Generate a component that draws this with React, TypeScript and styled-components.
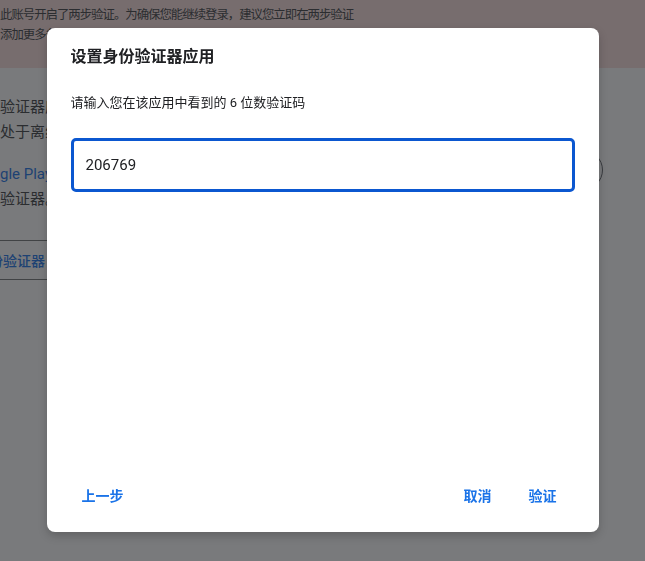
import React from 'react';
import styled, { createGlobalStyle } from 'styled-components';

const GlobalStyle = createGlobalStyle`
  html, body {
    margin: 0;
    padding: 0;
    width: 100%;
    height: 100%;
    overflow: hidden;
    background: #ffffff;
  }
  body {
    font-family: Roboto, "Noto Sans CJK SC", sans-serif;
  }
`;

const Page = styled.div`
  width: 645px;
  height: 561px;
  overflow: hidden;
  background: #ffffff;
`;

const Banner = styled.div`
  height: 68px;
  box-sizing: border-box;
  padding-top: 5px;
  background: #f9dedc;
  color: #3c4043;
  font-size: 12.4px;
  letter-spacing: -1px;
  line-height: 20px;
  white-space: nowrap;
`;

const Content = styled.div`
  display: flex;
  justify-content: space-between;
  padding: 27px 42px 0 0;
`;

const Column = styled.div`
  display: flex;
  flex-direction: column;
  width: 60px;
  overflow: hidden;
`;

const Paragraph = styled.p`
  margin: 0 0 17px;
  font-size: 15px;
  line-height: 25px;
  color: #3c4043;
  white-space: nowrap;
`;

const Link = styled.span`
  color: #1a73e8;
`;

const OutlineButton = styled.div`
  margin: 11px 0 0 -50px;
  width: 240px;
  height: 38px;
  padding: 0 24px;
  border: 1px solid #747775;
  border-radius: 4px;
  display: flex;
  align-items: center;
  font-size: 14px;
  font-weight: 500;
  color: #1a73e8;
`;

const Avatar = styled.div`
  flex: none;
  width: 40px;
  height: 40px;
  margin-top: 55px;
  border: 1px solid #5f6368;
  border-radius: 50%;
  box-sizing: border-box;
`;

const Overlay = styled.div`
  position: fixed;
  inset: 0;
  background: rgba(32, 33, 36, 0.6);
  display: flex;
  align-items: center;
  justify-content: center;
`;

const Dialog = styled.div`
  width: 552px;
  height: 504px;
  margin-top: -1px;
  box-sizing: border-box;
  background: #ffffff;
  border-radius: 8px;
  box-shadow: 0 4px 10px rgba(0, 0, 0, 0.2);
  display: flex;
  flex-direction: column;
`;

const Body = styled.div`
  flex: 1;
  padding: 17px 24px 0;
  display: flex;
  flex-direction: column;
`;

const Title = styled.h2`
  margin: 0;
  font-size: 16px;
  line-height: 24px;
  font-weight: 700;
  color: #202124;
`;

const Subtitle = styled.p`
  margin: 24px 0 0;
  font-size: 13px;
  line-height: 20px;
  color: #202124;
`;

const CodeInput = styled.input`
  margin-top: 25px;
  width: 100%;
  height: 54px;
  box-sizing: border-box;
  padding: 0 12px;
  border: 3px solid #0b57d0;
  border-radius: 5px;
  outline: none;
  font-family: Roboto, "Noto Sans CJK SC", sans-serif;
  font-size: 15px;
  color: #202124;
  background: #ffffff;
`;

const Footer = styled.div`
  display: flex;
  align-items: center;
  padding: 0 30px 19px 23px;
  gap: 13px;
`;

const Spacer = styled.div`
  flex: 1;
`;

const TextButton = styled.button`
  height: 36px;
  padding: 0 12px;
  border: none;
  border-radius: 4px;
  background: transparent;
  font-family: Roboto, "Noto Sans CJK SC", sans-serif;
  font-size: 14px;
  font-weight: 700;
  color: #1a73e8;
  cursor: pointer;
`;

export default function App() {
  return (
    <>
      <GlobalStyle />
      <Page>
        <Banner>
          <div>此账号开启了两步验证。为确保您能继续登录，建议您立即在两步验证</div>
          <div>添加更多备用验证方式</div>
        </Banner>
        <Content>
          <Column>
            <Paragraph>
              验证器应
              <br />
              处于离线
            </Paragraph>
            <Paragraph>
              <Link>gle Play</Link>
              <br />
              验证器。
            </Paragraph>
            <OutlineButton>身份验证器</OutlineButton>
          </Column>
          <Avatar />
        </Content>
      </Page>
      <Overlay>
        <Dialog role="dialog">
          <Body>
            <Title>设置身份验证器应用</Title>
            <Subtitle>请输入您在该应用中看到的 6 位数验证码</Subtitle>
            <CodeInput defaultValue="206769" />
          </Body>
          <Footer>
            <TextButton>上一步</TextButton>
            <Spacer />
            <TextButton>取消</TextButton>
            <TextButton>验证</TextButton>
          </Footer>
        </Dialog>
      </Overlay>
    </>
  );
}
